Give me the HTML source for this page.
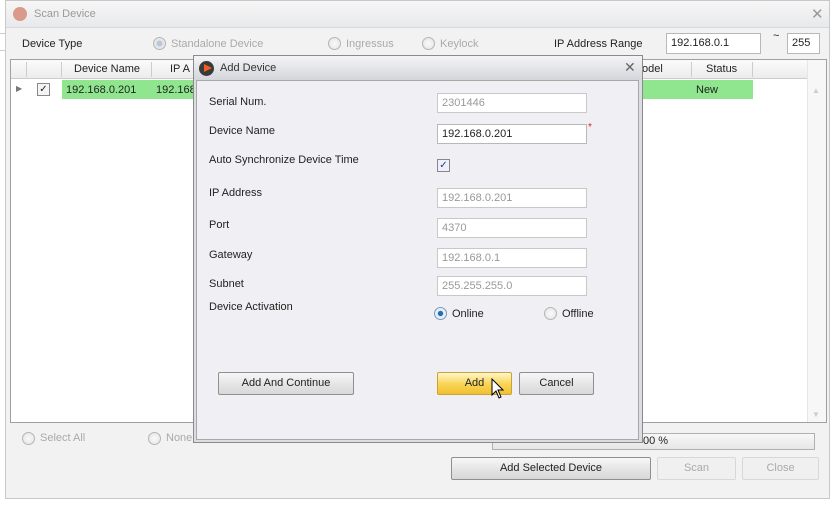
<!DOCTYPE html>
<html><head><style>
*{box-sizing:border-box;margin:0;padding:0}
body{width:834px;height:505px;background:#fff;font-family:"Liberation Sans",Arial,sans-serif;font-size:11px;color:#222;position:relative;overflow:hidden}
.a{position:absolute}
.inp{position:absolute;background:#fff;border:1px solid #b8b8b8;padding:3px 4px;font-size:11px;height:20px}
.dis{color:#999;background:#fff;border-color:#c8c8c8}
.btn{position:absolute;border:1px solid #8e8f8f;border-radius:2px;background:linear-gradient(#f7f7f7,#e6e6e6 50%,#d8d8d8);text-align:center;font-size:11px;line-height:20px;height:23px}
.radio{position:absolute;width:13px;height:13px;border-radius:50%;border:1px solid #b5b5b5;background:radial-gradient(#fafafa,#e2e2e2)}
.lbl{position:absolute;font-size:11px}
.g{color:#aaa}
</style></head><body>
<!-- outer window -->
<div class="a" style="left:5px;top:0;width:825px;height:499px;border:1px solid #c8c8c8;background:#f2f2f2"></div>
<div class="a" style="left:6px;top:1px;width:823px;height:27px;background:linear-gradient(#f6f6f6,#e8e9ec);border-bottom:1px solid #d8d8d8"></div>
<div class="a" style="left:13px;top:7px;width:14px;height:14px;border-radius:50%;background:#d99a8a"></div>
<div class="lbl g" style="left:34px;top:8px;color:#9a9a9a">Scan Device</div>
<div class="lbl" style="left:811px;top:5px;font-size:15px;color:#9a9a9a">✕</div>
<div class="a" style="left:0;top:33px;width:6px;height:18px;border:1px solid #ccc;border-left:none;background:#fff"></div>
<div class="lbl" style="left:22px;top:38px">Device Type</div>
<div class="radio" style="left:153px;top:37px;background:radial-gradient(#b8c8d8 35%,#e6e6e6 40%)"></div>
<div class="lbl g" style="left:171px;top:38px">Standalone Device</div>
<div class="radio" style="left:328px;top:37px"></div>
<div class="lbl g" style="left:346px;top:38px">Ingressus</div>
<div class="radio" style="left:422px;top:37px"></div>
<div class="lbl g" style="left:440px;top:38px">Keylock</div>
<div class="lbl" style="left:554px;top:38px">IP Address Range</div>
<div class="inp" style="left:666px;top:33px;width:95px;height:21px">192.168.0.1</div>
<div class="lbl" style="left:773px;top:30px">~</div>
<div class="inp" style="left:787px;top:33px;width:33px;height:21px">255</div>
<!-- grid -->
<div class="a" style="left:10px;top:59px;width:817px;height:364px;border:1px solid #a0a0a0;background:#fff"></div>
<div class="a" style="left:11px;top:60px;width:815px;height:19px;background:linear-gradient(#fbfbfb,#ececec);border-bottom:1px solid #ccc"></div>
<div class="a" style="left:26px;top:62px;height:15px;border-left:1px solid #ccc"></div>
<div class="a" style="left:61px;top:62px;height:15px;border-left:1px solid #ccc"></div>
<div class="a" style="left:151px;top:62px;height:15px;border-left:1px solid #ccc"></div>
<div class="a" style="left:691px;top:62px;height:15px;border-left:1px solid #ccc"></div>
<div class="a" style="left:752px;top:62px;height:15px;border-left:1px solid #ccc"></div>
<div class="lbl" style="left:74px;top:63px">Device Name</div>
<div class="lbl" style="left:170px;top:63px">IP A</div>
<div class="lbl" style="left:642px;top:63px">odel</div>
<div class="lbl" style="left:706px;top:63px">Status</div>
<div class="lbl" style="left:16px;top:84px;font-size:8px;color:#777">▶</div>
<div class="a" style="left:37px;top:83px;width:13px;height:13px;border:1px solid #888;background:#f4f4f4;font-size:10px;line-height:11px;text-align:center">✓</div>
<div class="a" style="left:62px;top:80px;width:691px;height:19px;background:#8fe68f"></div>
<div class="lbl" style="left:66px;top:84px">192.168.0.201</div>
<div class="lbl" style="left:156px;top:84px">192.168</div>
<div class="lbl" style="left:696px;top:84px">New</div>
<div class="a" style="left:807px;top:60px;width:19px;height:362px;background:#f7f7f7;border-left:1px solid #e6e6e6"></div>
<div class="lbl" style="left:812px;top:86px;color:#ccc;font-size:8px">▲</div>
<div class="lbl" style="left:812px;top:410px;color:#ccc;font-size:8px">▼</div>
<div class="radio" style="left:22px;top:432px"></div>
<div class="lbl g" style="left:40px;top:432px">Select All</div>
<div class="radio" style="left:148px;top:432px"></div>
<div class="lbl g" style="left:166px;top:432px">None</div>
<div class="a" style="left:492px;top:433px;width:323px;height:17px;border:1px solid #b0b0b0;background:linear-gradient(#f8f8f8,#e6e6e6)"></div>
<div class="lbl" style="left:643px;top:435px">00 %</div>
<div class="btn" style="left:451px;top:457px;width:200px">Add Selected Device</div>
<div class="btn g" style="left:657px;top:457px;width:79px;border-color:#d8d8d8;background:#f0f0f0">Scan</div>
<div class="btn g" style="left:742px;top:457px;width:77px;border-color:#d8d8d8;background:#f0f0f0">Close</div>
<!-- dialog -->
<div class="a" style="left:193px;top:55px;width:450px;height:388px;border:1px solid #8a8a8a;background:#dcdde2"></div>
<div class="a" style="left:194px;top:56px;width:448px;height:24px;background:linear-gradient(#f4f4f6,#d4d6db)"></div>
<div class="a" style="left:199px;top:61px;width:15px;height:15px;border-radius:50%;background:#3a3a3a"></div>
<div class="a" style="left:204px;top:64px;width:0;height:0;border-left:8px solid #f06020;border-top:4.5px solid transparent;border-bottom:4.5px solid transparent"></div>
<div class="lbl" style="left:220px;top:62px;color:#333">Add Device</div>
<div class="lbl" style="left:624px;top:59px;font-size:14px;color:#666">✕</div>
<div class="a" style="left:196px;top:80px;width:443px;height:360px;border:1px solid #a8a8a8;background:#f0f0f4"></div>
<div class="lbl" style="left:209px;top:96px">Serial Num.</div>
<div class="inp dis" style="left:437px;top:93px;width:150px">2301446</div>
<div class="lbl" style="left:209px;top:125px">Device Name</div>
<div class="inp" style="left:437px;top:124px;width:150px">192.168.0.201</div>
<div class="lbl" style="left:588px;top:122px;color:#e02020;font-size:10px">*</div>
<div class="lbl" style="left:209px;top:154px">Auto Synchronize Device Time</div>
<div class="a" style="left:437px;top:159px;width:13px;height:13px;border:1px solid #888;background:#eef;font-size:10px;line-height:11px;text-align:center;color:#246">✓</div>
<div class="lbl" style="left:209px;top:187px">IP Address</div>
<div class="inp dis" style="left:437px;top:188px;width:150px">192.168.0.201</div>
<div class="lbl" style="left:209px;top:219px">Port</div>
<div class="inp dis" style="left:437px;top:218px;width:150px">4370</div>
<div class="lbl" style="left:209px;top:249px">Gateway</div>
<div class="inp dis" style="left:437px;top:248px;width:150px">192.168.0.1</div>
<div class="lbl" style="left:209px;top:278px">Subnet</div>
<div class="inp dis" style="left:437px;top:276px;width:150px">255.255.255.0</div>
<div class="lbl" style="left:209px;top:301px">Device Activation</div>
<div class="radio" style="left:434px;top:307px;background:radial-gradient(#1f6fb8 30%,#e8eef4 38%);border-color:#7a9ab8"></div>
<div class="lbl" style="left:452px;top:308px">Online</div>
<div class="radio" style="left:544px;top:307px"></div>
<div class="lbl" style="left:562px;top:308px">Offline</div>
<div class="btn" style="left:218px;top:372px;width:136px">Add And Continue</div>
<div class="btn" style="left:437px;top:372px;width:75px;background:linear-gradient(#fff6cc,#f9d65a 50%,#f1c030);border-color:#c9a33a">Add</div>
<div class="btn" style="left:519px;top:372px;width:75px">Cancel</div>
<svg class="a" style="left:491px;top:378px" width="14" height="22" viewBox="0 0 14 22"><path d="M1 1 L1 17 L5 13 L8 20 L10 19 L7 12 L12 12 Z" fill="#fff" stroke="#000" stroke-width="1"/></svg>
</body></html>
